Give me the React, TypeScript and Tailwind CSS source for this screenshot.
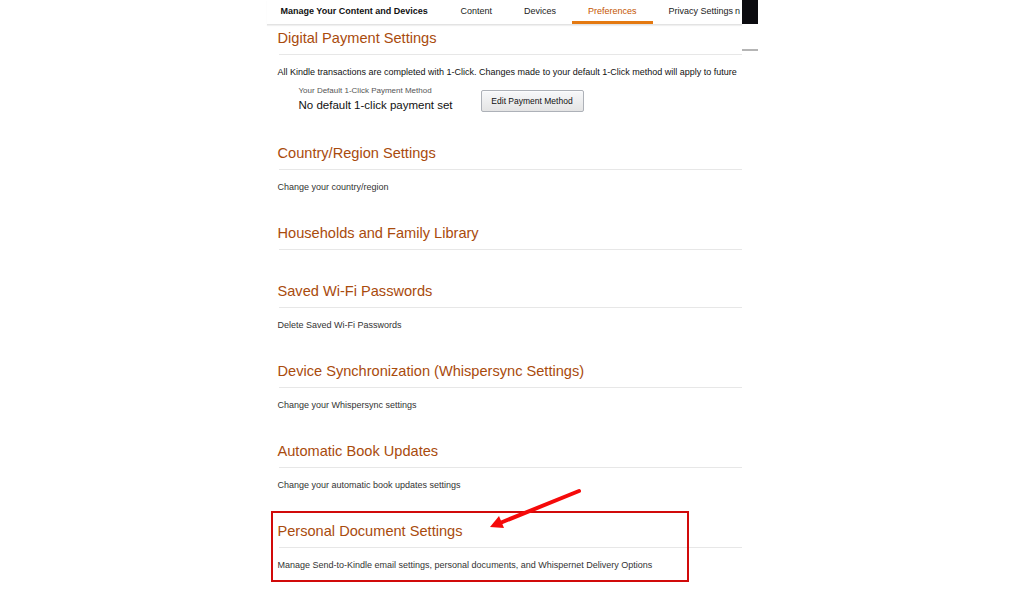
import React from "react";

const font = { fontFamily: '"Liberation Sans", Arial, sans-serif' };

type SectionProps = {
  title: string;
  desc?: string;
  className?: string;
  children?: React.ReactNode;
};

const Section = ({ title, desc, className, children }: SectionProps) => (
  <div className={className ?? (desc ? "pb-[32px]" : "pb-[33px]")}>
    <h2 className="h-[17px] text-[14.6px] leading-[17px] text-[#a94b0d]">{title}</h2>
    <div className="mt-[7px] ml-px h-px bg-[#e7e7e7]" />
    {desc && <p className="mt-[12px] text-[9px] leading-[11px] text-[#333]">{desc}</p>}
    {children}
  </div>
);

const tabs = [
  { label: "Content", active: false },
  { label: "Devices", active: false },
  { label: "Preferences", active: true },
];

export default function App() {
  return (
    <div className="min-h-[598px] w-full bg-white" style={font}>
      <div className="relative mx-auto flex w-[491px]">
        <div className="w-[475px]">
          {/* top nav */}
          <div className="flex h-[25px] items-stretch overflow-hidden border-b border-[#e3e3e3] shadow-[0_1px_1px_rgba(0,0,0,0.06)]">
            <div className="flex w-[178px] items-center pl-[14px] text-[9px] font-bold text-[#111]">
              Manage Your Content and Devices
            </div>
            {tabs.map((tab) => (
              <div
                key={tab.label}
                className={
                  tab.active
                    ? "flex items-center border-b-[3px] border-[#e47911] px-[16px] pt-[3px] text-[9px] text-[#c45500]"
                    : "flex items-center px-[16px] text-[9px] text-[#222]"
                }
              >
                {tab.label}
              </div>
            ))}
            <div className="flex items-center whitespace-nowrap pl-[16px] text-[9px] text-[#222]">
              Privacy Settings<span className="ml-[2px]">n</span>
            </div>
          </div>

          {/* settings list */}
          <div className="pt-[5px] pl-[11px]">
            <Section title="Digital Payment Settings" className="pb-[33px]">
              <p className="mt-[12px] whitespace-nowrap text-[9px] leading-[11px] text-[#111]">
                All Kindle transactions are completed with 1-Click. Changes made to your default 1-Click method will apply to future
              </p>
              <div className="mt-[8px] flex items-start pl-[21px]">
                <div className="w-[182px]">
                  <div className="text-[8px] leading-[10px] text-[#555]">Your Default 1-Click Payment Method</div>
                  <div className="mt-[3px] text-[11.5px] leading-[13px] text-[#111]">No default 1-click payment set</div>
                </div>
                <button className="mt-[4px] h-[22px] w-[103px] rounded-[2px] border border-[#adb1b8] bg-gradient-to-b from-[#f7f8fa] to-[#e4e4e4] text-[8.5px] text-[#111] shadow-[0_1px_0_rgba(255,255,255,0.6)_inset]">
                  Edit Payment Method
                </button>
              </div>
            </Section>
            <Section title="Country/Region Settings" desc="Change your country/region" />
            <Section title="Households and Family Library" />
            <Section title="Saved Wi-Fi Passwords" desc="Delete Saved Wi-Fi Passwords" />
            <Section title="Device Synchronization (Whispersync Settings)" desc="Change your Whispersync settings" />
            <Section title="Automatic Book Updates" desc="Change your automatic book updates settings" />
            <div className="relative">
              <Section
                title="Personal Document Settings"
                desc="Manage Send-to-Kindle email settings, personal documents, and Whispernet Delivery Options"
              />
              <div className="absolute left-[-7px] top-[-12px] h-[71px] w-[418px] border-2 border-[#d10a0a]" />
            </div>
          </div>
        </div>

        {/* right edge strip */}
        <div className="w-[16px]">
          <div className="h-[24px] bg-[#0b0b0f]" />
          <div className="mt-[25px] h-[2px] bg-[#b5b5b5]" />
        </div>

        {/* annotation arrow */}
        <svg
          className="absolute left-[220px] top-[486px] h-[45px] w-[100px]"
          viewBox="0 0 100 45"
        >
          <line x1="92" y1="5" x2="13" y2="37" stroke="#f50a0a" strokeWidth="4" strokeLinecap="round" />
          <polygon points="3,41 17,42 12,30" fill="#f50a0a" />
        </svg>
      </div>
    </div>
  );
}
